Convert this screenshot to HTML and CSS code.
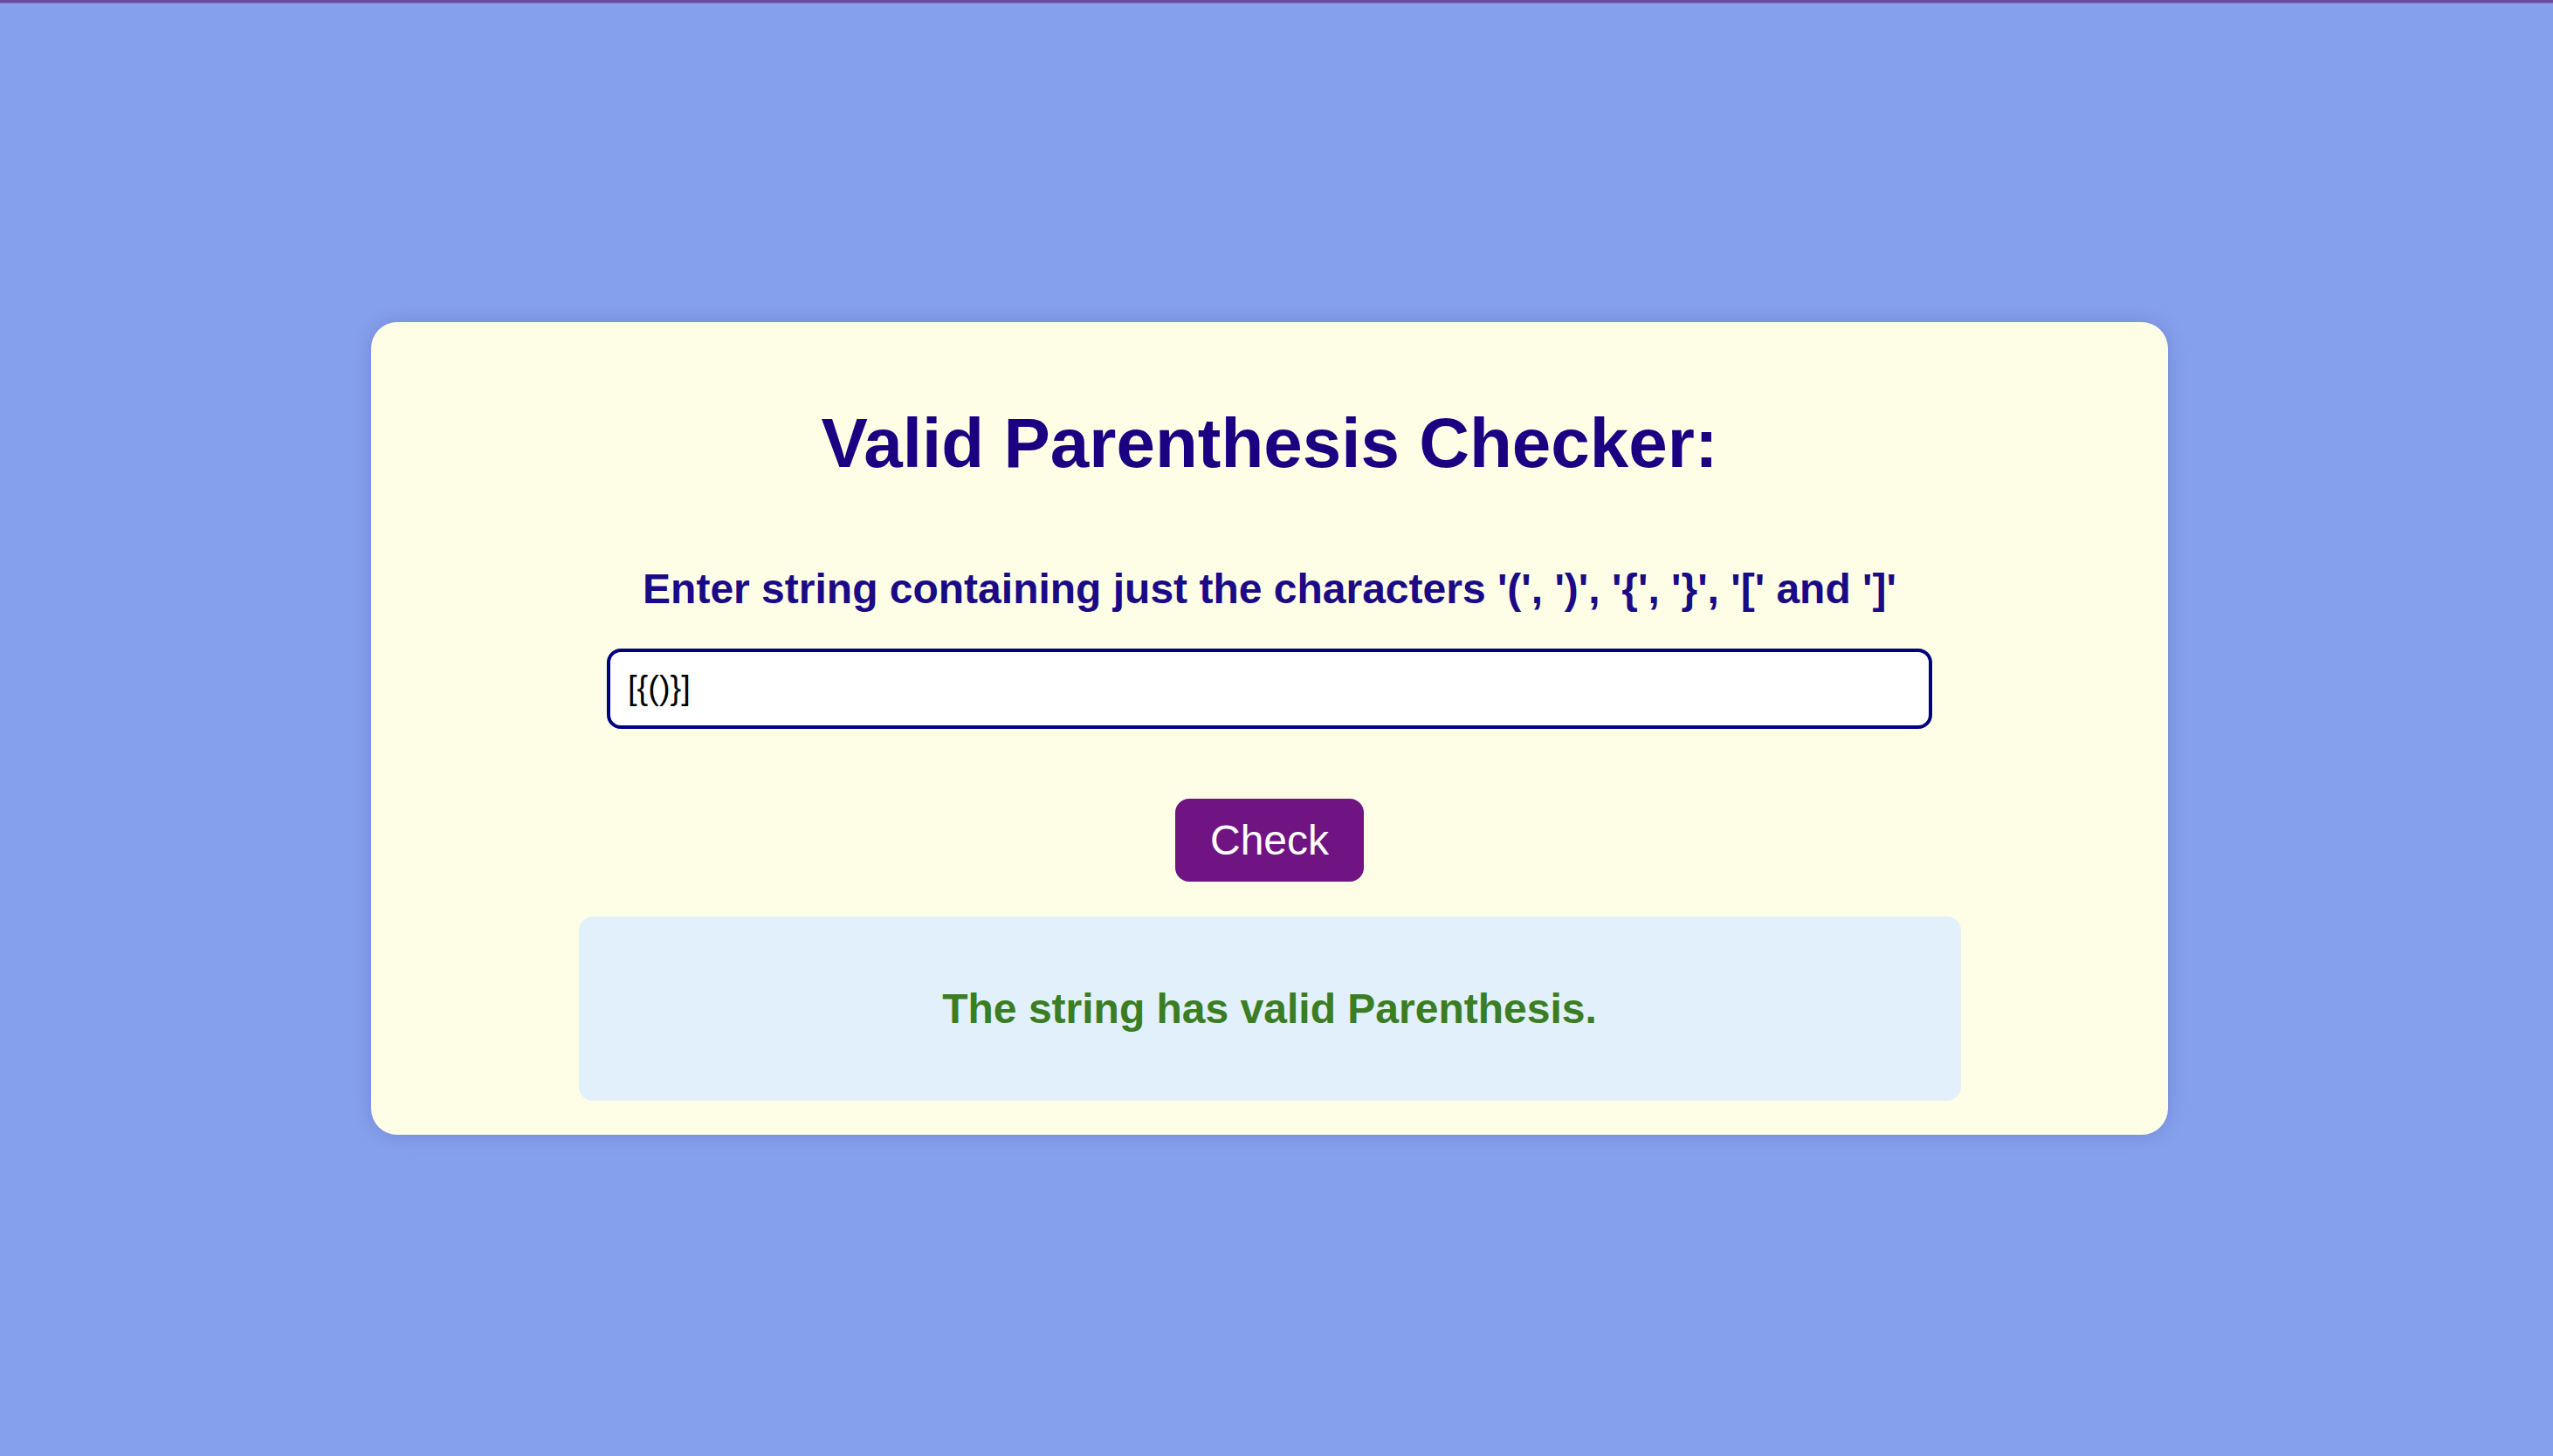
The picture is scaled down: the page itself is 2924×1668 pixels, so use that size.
FILE: index.html
```html
<!DOCTYPE html>
<html lang="en">
<head>
<meta charset="utf-8">
<title>Valid Parenthesis Checker</title>
<link rel="stylesheet" href="styles.css">
</head>
<body>
<div class="topbar"></div>
<main class="page">
  <section class="card">
    <h1 class="title">Valid Parenthesis Checker:</h1>
    <h3 class="prompt">Enter string containing just the characters '(', ')', '{', '}', '[' and ']'</h3>
    <input class="field" type="text" value="[{()}]">
    <button class="check-btn" type="button">Check</button>
    <div class="result">
      <p class="result-text">The string has valid Parenthesis.</p>
    </div>
  </section>
</main>
</body>
</html>
```

FILE: styles.css
```css
html, body {
  margin: 0;
  padding: 0;
}

body {
  background: #85a0ec;
  font-family: "Liberation Sans", Arial, Helvetica, sans-serif;
}

.topbar {
  position: fixed;
  top: 0;
  left: 0;
  right: 0;
  height: 4px;
  background: linear-gradient(#6a4a9e 0 3px, #8d78c4 3px 4px);
}

.page {
  min-height: 100vh;
  display: flex;
  align-items: center;
  justify-content: center;
  padding-right: 16px;
  box-sizing: border-box;
}

.card {
  width: 2058px;
  height: 931px;
  box-sizing: border-box;
  background: #fefee6;
  border-radius: 30px;
  box-shadow: 0 0 22px rgba(40, 40, 120, 0.18);
  display: flex;
  flex-direction: column;
  align-items: center;
  padding-top: 93px;
}

.title {
  margin: 0;
  font-size: 80px;
  font-weight: 700;
  color: #1b0082;
  line-height: 92px;
}

.prompt {
  margin: 93px 0 0;
  font-size: 48px;
  font-weight: 700;
  color: #1b0a86;
  line-height: 55px;
}

.field {
  margin-top: 41px;
  width: 1518px;
  height: 92px;
  box-sizing: border-box;
  border: 4px solid #000080;
  border-radius: 16px;
  background: #ffffff;
  padding: 0 20px;
  font-family: "Liberation Sans", Arial, sans-serif;
  font-size: 38px;
  color: #000000;
  outline: none;
}

.check-btn {
  margin-top: 80px;
  width: 216px;
  height: 95px;
  border: none;
  border-radius: 16px;
  background: #6f1482;
  color: #ffffff;
  font-family: "Liberation Sans", Arial, sans-serif;
  font-size: 48px;
  padding: 0;
  line-height: 55px;
}

.result {
  margin-top: 40px;
  width: 1583px;
  height: 211px;
  box-sizing: border-box;
  background: #e2f0fc;
  border-radius: 16px;
  display: flex;
  align-items: center;
  justify-content: center;
}

.result-text {
  margin: 0;
  font-size: 48px;
  font-weight: 700;
  color: #3a7d22;
  line-height: 55px;
}
```
